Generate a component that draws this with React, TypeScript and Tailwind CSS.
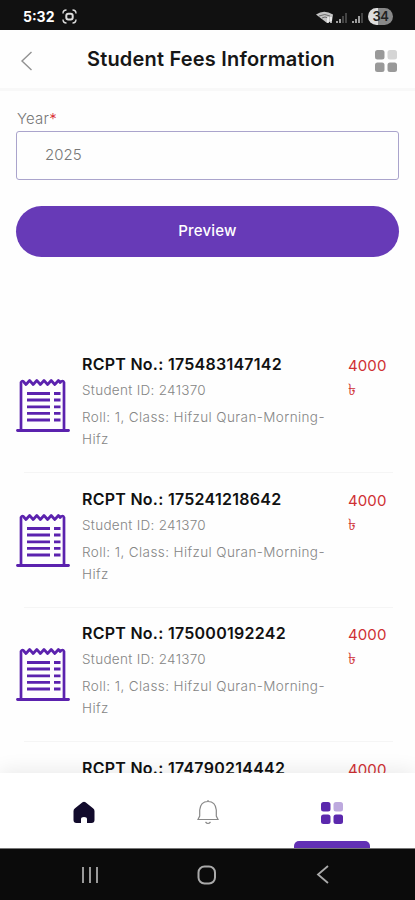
import React from "react";

const receipts = ["175483147142", "175241218642", "175000192242", "174790214442"];

function ReceiptIcon() {
  return (
    <svg className="mt-[27px] h-[54px] w-[54px] shrink-0" viewBox="0 0 54 54" fill="none" stroke="#5b22ae">
      <path
        d="M5 51V3.5q1.6-3 3.2 0l1.8 2 3.6-4 3.6 4 3.6-4 3.6 4 3.6-4 3.6 4 3.6-4 3.6 4 3.6-4 1.8 2q2.6-3 3.8 0v47.5"
        strokeWidth="2.7"
        strokeLinejoin="round"
      />
      <path d="M1.5 51.5h51" strokeWidth="2.8" strokeLinecap="round" />
      <path d="M11 14.5h23M11 21h23M11 27.8h23M11 34.3h23M11 41h23M38 14.5h6.5M38 21h6.5M38 27.8h6.5M38 34.3h6.5M38 41h6.5" strokeWidth="2.8" />
    </svg>
  );
}

function Receipt({ no }: { no: string }) {
  return (
    <li className="group">
      <div className="flex h-[120px] items-start">
        <ReceiptIcon />
        <div className="ml-[12px] w-[266px] shrink-0 text-[#858585]">
          <h2 className="whitespace-nowrap text-[16px] leading-6 font-semibold tracking-[0.26px] text-[#111]">RCPT No.: {no}</h2>
          <p className="mt-[3px] text-[13.5px] leading-[22px] font-light tracking-[0.3px]">Student ID: 241370</p>
          <p className="mt-[5px] text-[13.5px] leading-[22px] font-light tracking-[0.4px]">
            <span className="block whitespace-nowrap">Roll: 1, Class: Hifzul Quran-Morning-</span>
            <span className="block">Hifz</span>
          </p>
        </div>
        <div className="mt-[2px] text-[15px] leading-[23px] text-[#cf3033]">
          <div className="tracking-[0.1px]">4000</div>
          <div className="mt-px text-[16px]">৳</div>
        </div>
      </div>
      <div className="mr-[6px] mb-[13.5px] ml-2 h-px bg-[#f5f5f5] group-last:hidden" />
    </li>
  );
}

function GridIcon({ className }: { className: string }) {
  return (
    <svg className={className} viewBox="0 0 22 22" fill="currentColor">
      <rect width="9.5" height="9.5" rx="2.5" />
      <rect x="12.5" width="9.5" height="9.5" rx="2.5" opacity=".4" />
      <rect y="12.5" width="9.5" height="9.5" rx="2.5" />
      <rect x="12.5" y="12.5" width="9.5" height="9.5" rx="2.5" />
    </svg>
  );
}

function StatusBar() {
  return (
    <div className="flex h-[30px] shrink-0 items-center bg-[#111] pt-[3px] pl-[23px] text-white">
      <span className="w-[33px] text-[14px] leading-4 font-bold">5:32</span>
      <svg className="ml-[6px] h-[15px] w-[15px]" viewBox="0 0 15 15" fill="none" stroke="#ddd" strokeWidth="1.4">
        <path d="M1 4.5Q1 1 4.5 1M10.5 1Q14 1 14 4.5M14 10.5Q14 14 10.5 14M4.5 14Q1 14 1 10.5" />
        <rect x="4.3" y="4.8" width="6.4" height="5.6" rx="2" strokeWidth="2" />
      </svg>
      <svg className="ml-[239px] h-4 w-[48px]" viewBox="0 0 48 16">
        <path d="M0 5.5Q8 0 17 5.5L16 12 11 14Z" fill="#c4c4c4" />
        <path d="M3 7q6-3 11 0M6 9q3-2 6 0" fill="none" stroke="#555" strokeWidth=".8" />
        <path d="M12 8v6m3-6v6" stroke="#fff" strokeWidth="1.3" />
        <path d="M21 14v-2m3 2v-4" stroke="#ccc" strokeWidth="1.5" />
        <path d="M27 14V7m3 7V4" stroke="#555" strokeWidth="1.5" />
        <path d="M37 14v-2m3 2v-4m3 4V7" stroke="#ccc" strokeWidth="1.5" />
        <path d="M46 14V4" stroke="#555" strokeWidth="1.5" />
      </svg>
      <span className="ml-[4px] flex h-[17px] w-[25px] items-center justify-center rounded-full bg-linear-to-r from-[#ddd] from-40% to-[#888] to-40% text-[13px] font-semibold tracking-[-0.5px] text-[#222]">
        34
      </span>
    </div>
  );
}

export default function App() {
  return (
    <div className="flex h-[900px] w-[415px] flex-col overflow-hidden bg-[#fefefe] font-['Inter','Noto_Sans',sans-serif]">
      <StatusBar />
      <header className="flex h-[61px] shrink-0 items-center justify-between border-b-[3px] border-[#f8f8f8] pr-[18px] pl-[20px]">
        <svg className="mt-[3px] h-[22px] w-[14px]" viewBox="0 0 14 22" fill="none" stroke="#929292" strokeWidth="1.4">
          <path d="M11.5 2 2 11l9.5 9" />
        </svg>
        <h1 className="ml-[13px] whitespace-nowrap text-[20px] leading-7 font-semibold tracking-[0.2px] text-[#161616]">Student Fees Information</h1>
        <GridIcon className="mt-[3px] h-[22px] w-[22px] text-[#999]" />
      </header>
      <main className="min-h-0 flex-1 overflow-hidden px-4">
        <form className="pt-[17px]">
          <label className="block h-[23px] pl-px text-[15px] leading-[22px] font-light tracking-[0.2px] text-[#777]">
            Year<span className="text-[#d8272d]">*</span>
          </label>
          <div className="flex h-[49px] items-center rounded-[3px] border border-[#aaa4cc] pl-[28px] text-[15px] font-light text-[#777]">2025</div>
          <button type="button" className="mt-[25.5px] h-[51px] w-full rounded-full bg-[#673ab7] text-[15px] font-medium tracking-[0.2px] text-white">
            Preview
          </button>
        </form>
        <ul className="mt-[95.5px]">
          {receipts.map((no) => (
            <Receipt key={no} no={no} />
          ))}
        </ul>
      </main>
      <nav className="relative z-10 flex h-[75px] shrink-0 bg-white pt-[26px] shadow-[0_-3px_18px_rgba(0,0,0,0.08)]">
        <svg className="mt-px ml-[73px] h-[24px] w-[22px]" viewBox="0 0 22 24" fill="#120b2c">
          <path d="M9.5 2.3Q11 1 12.5 2.3L20 8.2Q21.5 9.4 21.5 11v9Q21.5 23 18.5 23H14v-4q0-2-3-2t-3 2v4H3.5Q.5 23 .5 20v-9Q.5 9.4 2 8.2Z" />
        </svg>
        <svg className="ml-[101px] h-[27px] w-[24px]" viewBox="0 0 24 27" fill="none" stroke="#888" strokeWidth="1.2">
          <path d="M12 1v1.5M2 20.5h20L20.3 17v-6Q19.5 2.5 12 2.5T3.7 11v6ZM9.5 23q2.5 3 5 0" />
        </svg>
        <GridIcon className="mt-[3px] ml-[101px] h-[22px] w-[22px] text-[#5b28ad]" />
        <div className="absolute bottom-0 left-[294px] h-[7px] w-[76px] rounded-t-[5px] bg-[#6230b4]" />
      </nav>
      <div className="z-10 flex h-[52px] shrink-0 items-center border-t border-[#777] bg-[#0b0b0b]">
        <svg className="ml-[81px] h-[18px] w-[18px]" viewBox="0 0 18 18" stroke="#999" strokeWidth="2">
          <path d="M2 1v16M9 1v16M16 1v16" />
        </svg>
        <svg className="ml-[98px] h-[20px] w-[20px]" viewBox="0 0 20 20" fill="none" stroke="#aaa" strokeWidth="2">
          <rect x="1.5" y="1.5" width="16.5" height="17" rx="6" />
        </svg>
        <svg className="ml-[99px] h-[19px] w-[14px]" viewBox="0 0 14 19" fill="none" stroke="#aaa" strokeWidth="1.8">
          <path d="M12 1 2 9.5 12 18" />
        </svg>
      </div>
    </div>
  );
}
